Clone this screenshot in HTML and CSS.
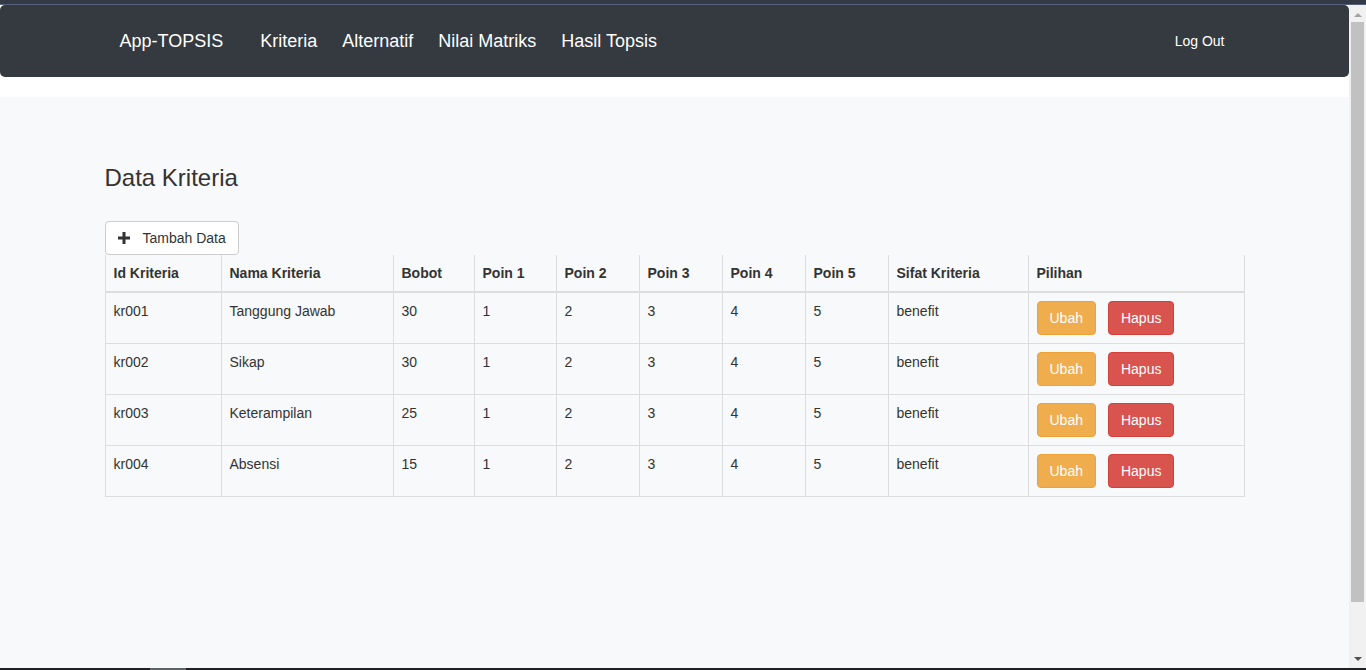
FILE: index.html
```html
<!DOCTYPE html>
<html lang="id">
<head>
<meta charset="utf-8">
<title>App-TOPSIS - Data Kriteria</title>
<link rel="stylesheet" href="styles.css">
</head>
<body>
<div class="topstrip"></div>
<div class="window">
  <div class="page">
    <header class="header">
      <nav class="navbar">
        <div class="nav-container">
          <a class="brand" href="#">App-TOPSIS</a>
          <ul class="nav-links">
            <li><a href="#">Kriteria</a></li>
            <li><a href="#">Alternatif</a></li>
            <li><a href="#">Nilai Matriks</a></li>
            <li><a href="#">Hasil Topsis</a></li>
          </ul>
          <a class="logout" href="#">Log Out</a>
        </div>
      </nav>
    </header>
    <main class="main">
      <div class="container">
        <h3 class="title">Data Kriteria</h3>
        <button class="btn btn-default" type="button">
          <svg class="plus" width="12" height="12" viewBox="0 0 12 12" aria-hidden="true"><path d="M4.5 0h3v4.5H12v3H7.5V12h-3V7.5H0v-3h4.5z" fill="#333"/></svg>
          <span>Tambah Data</span>
        </button>
        <table class="table">
          <colgroup>
            <col style="width:116px"><col style="width:172px"><col style="width:81px"><col style="width:82px"><col style="width:83px"><col style="width:83px"><col style="width:83px"><col style="width:83px"><col style="width:140px"><col style="width:216px">
          </colgroup>
          <thead>
            <tr><th>Id Kriteria</th><th>Nama Kriteria</th><th>Bobot</th><th>Poin 1</th><th>Poin 2</th><th>Poin 3</th><th>Poin 4</th><th>Poin 5</th><th>Sifat Kriteria</th><th>Pilihan</th></tr>
          </thead>
          <tbody>
            <tr><td>kr001</td><td>Tanggung Jawab</td><td>30</td><td>1</td><td>2</td><td>3</td><td>4</td><td>5</td><td>benefit</td><td><div class="actions"><button class="btn btn-warning">Ubah</button><button class="btn btn-danger">Hapus</button></div></td></tr>
            <tr><td>kr002</td><td>Sikap</td><td>30</td><td>1</td><td>2</td><td>3</td><td>4</td><td>5</td><td>benefit</td><td><div class="actions"><button class="btn btn-warning">Ubah</button><button class="btn btn-danger">Hapus</button></div></td></tr>
            <tr><td>kr003</td><td>Keterampilan</td><td>25</td><td>1</td><td>2</td><td>3</td><td>4</td><td>5</td><td>benefit</td><td><div class="actions"><button class="btn btn-warning">Ubah</button><button class="btn btn-danger">Hapus</button></div></td></tr>
            <tr><td>kr004</td><td>Absensi</td><td>15</td><td>1</td><td>2</td><td>3</td><td>4</td><td>5</td><td>benefit</td><td><div class="actions"><button class="btn btn-warning">Ubah</button><button class="btn btn-danger">Hapus</button></div></td></tr>
          </tbody>
        </table>
      </div>
    </main>
  </div>
  <div class="scrollbar">
    <div class="arrow arrow-up"></div>
    <div class="thumb"></div>
    <div class="arrow arrow-down"></div>
  </div>
</div>
<div class="bottomstrip"><span class="tab"></span></div>
</body>
</html>
```

FILE: styles.css
```css
* { box-sizing: border-box; }
html, body { margin: 0; padding: 0; }
body {
  height: 670px;
  overflow: hidden;
  display: flex;
  flex-direction: column;
  font-family: "Liberation Sans", Arial, sans-serif;
  font-size: 14px;
  line-height: 20px;
  color: #333;
  background: #f8f9fa;
}
.topstrip {
  height: 5px;
  background: #333a46;
  border-bottom: 1px solid #55607a;
  flex: none;
}
.window {
  flex: 1;
  display: flex;
  min-height: 0;
}
.page {
  flex: 1;
  display: flex;
  flex-direction: column;
  background: #f8f9fa;
}
.header {
  background: #fff;
  padding-bottom: 20px;
}
.navbar {
  height: 72px;
  background: #343a40;
  border-radius: 5px;
  display: flex;
  align-items: center;
}
.nav-container {
  width: 1140px;
  margin: 0 auto;
  padding: 0 20px 0 15px;
  display: flex;
  align-items: center;
}
.navbar a {
  color: #fff;
  text-decoration: none;
}
.brand {
  font-size: 18px;
  line-height: 24px;
  margin-right: 37px;
}
.nav-links {
  list-style: none;
  margin: 0;
  padding: 0;
  display: flex;
  gap: 25px;
  font-size: 18px;
  line-height: 24px;
}
.logout {
  margin-left: auto;
  font-size: 14px;
}
.main { flex: 1; }
.container {
  width: 1140px;
  margin: 0 auto;
  padding-top: 68px;
}
.title {
  margin: 0;
  font-size: 24px;
  line-height: 26px;
  font-weight: 500;
  color: #333;
}
.btn {
  display: inline-flex;
  align-items: center;
  height: 34px;
  padding: 6px 12px;
  font-family: inherit;
  font-size: 14px;
  line-height: 20px;
  border: 1px solid transparent;
  border-radius: 4px;
  cursor: pointer;
}
.btn-default {
  margin-top: 30px;
  background: #fff;
  border-color: #ccc;
  color: #333;
  gap: 13px;
}
.btn-warning {
  background: #f0ad4e;
  border-color: #eea236;
  color: #fff;
}
.btn-danger {
  background: #d9534f;
  border-color: #d43f3a;
  color: #fff;
}
.table {
  width: 1139px;
  table-layout: fixed;
  border-collapse: collapse;
  border-left: 1px solid #ddd;
  border-right: 1px solid #ddd;
}
.table th, .table td {
  padding: 8px;
  text-align: left;
  vertical-align: top;
  border-left: 1px solid #ddd;
  border-right: 1px solid #ddd;
  line-height: 20px;
}
.table th {
  font-weight: bold;
  border-bottom: 2px solid #ddd;
}
.table td {
  border-bottom: 1px solid #ddd;
}
.actions { display: flex; gap: 12px; }
.scrollbar {
  width: 17px;
  flex: none;
  background: #f1f1f1;
  display: flex;
  flex-direction: column;
  align-items: center;
}
.arrow {
  width: 0;
  height: 0;
  border-left: 4px solid transparent;
  border-right: 4px solid transparent;
  flex: none;
}
.arrow-up {
  margin-top: 8px;
  border-bottom: 4px solid #a3a3a3;
}
.thumb {
  margin-top: 5px;
  width: 13px;
  height: 580px;
  background: #c1c1c1;
}
.arrow-down {
  margin-top: auto;
  margin-bottom: 7px;
  border-top: 4px solid #505050;
}
.bottomstrip {
  height: 2px;
  background: #202124;
  flex: none;
  display: flex;
}
.tab {
  margin-left: 150px;
  width: 36px;
  background: #5f6368;
}
```
